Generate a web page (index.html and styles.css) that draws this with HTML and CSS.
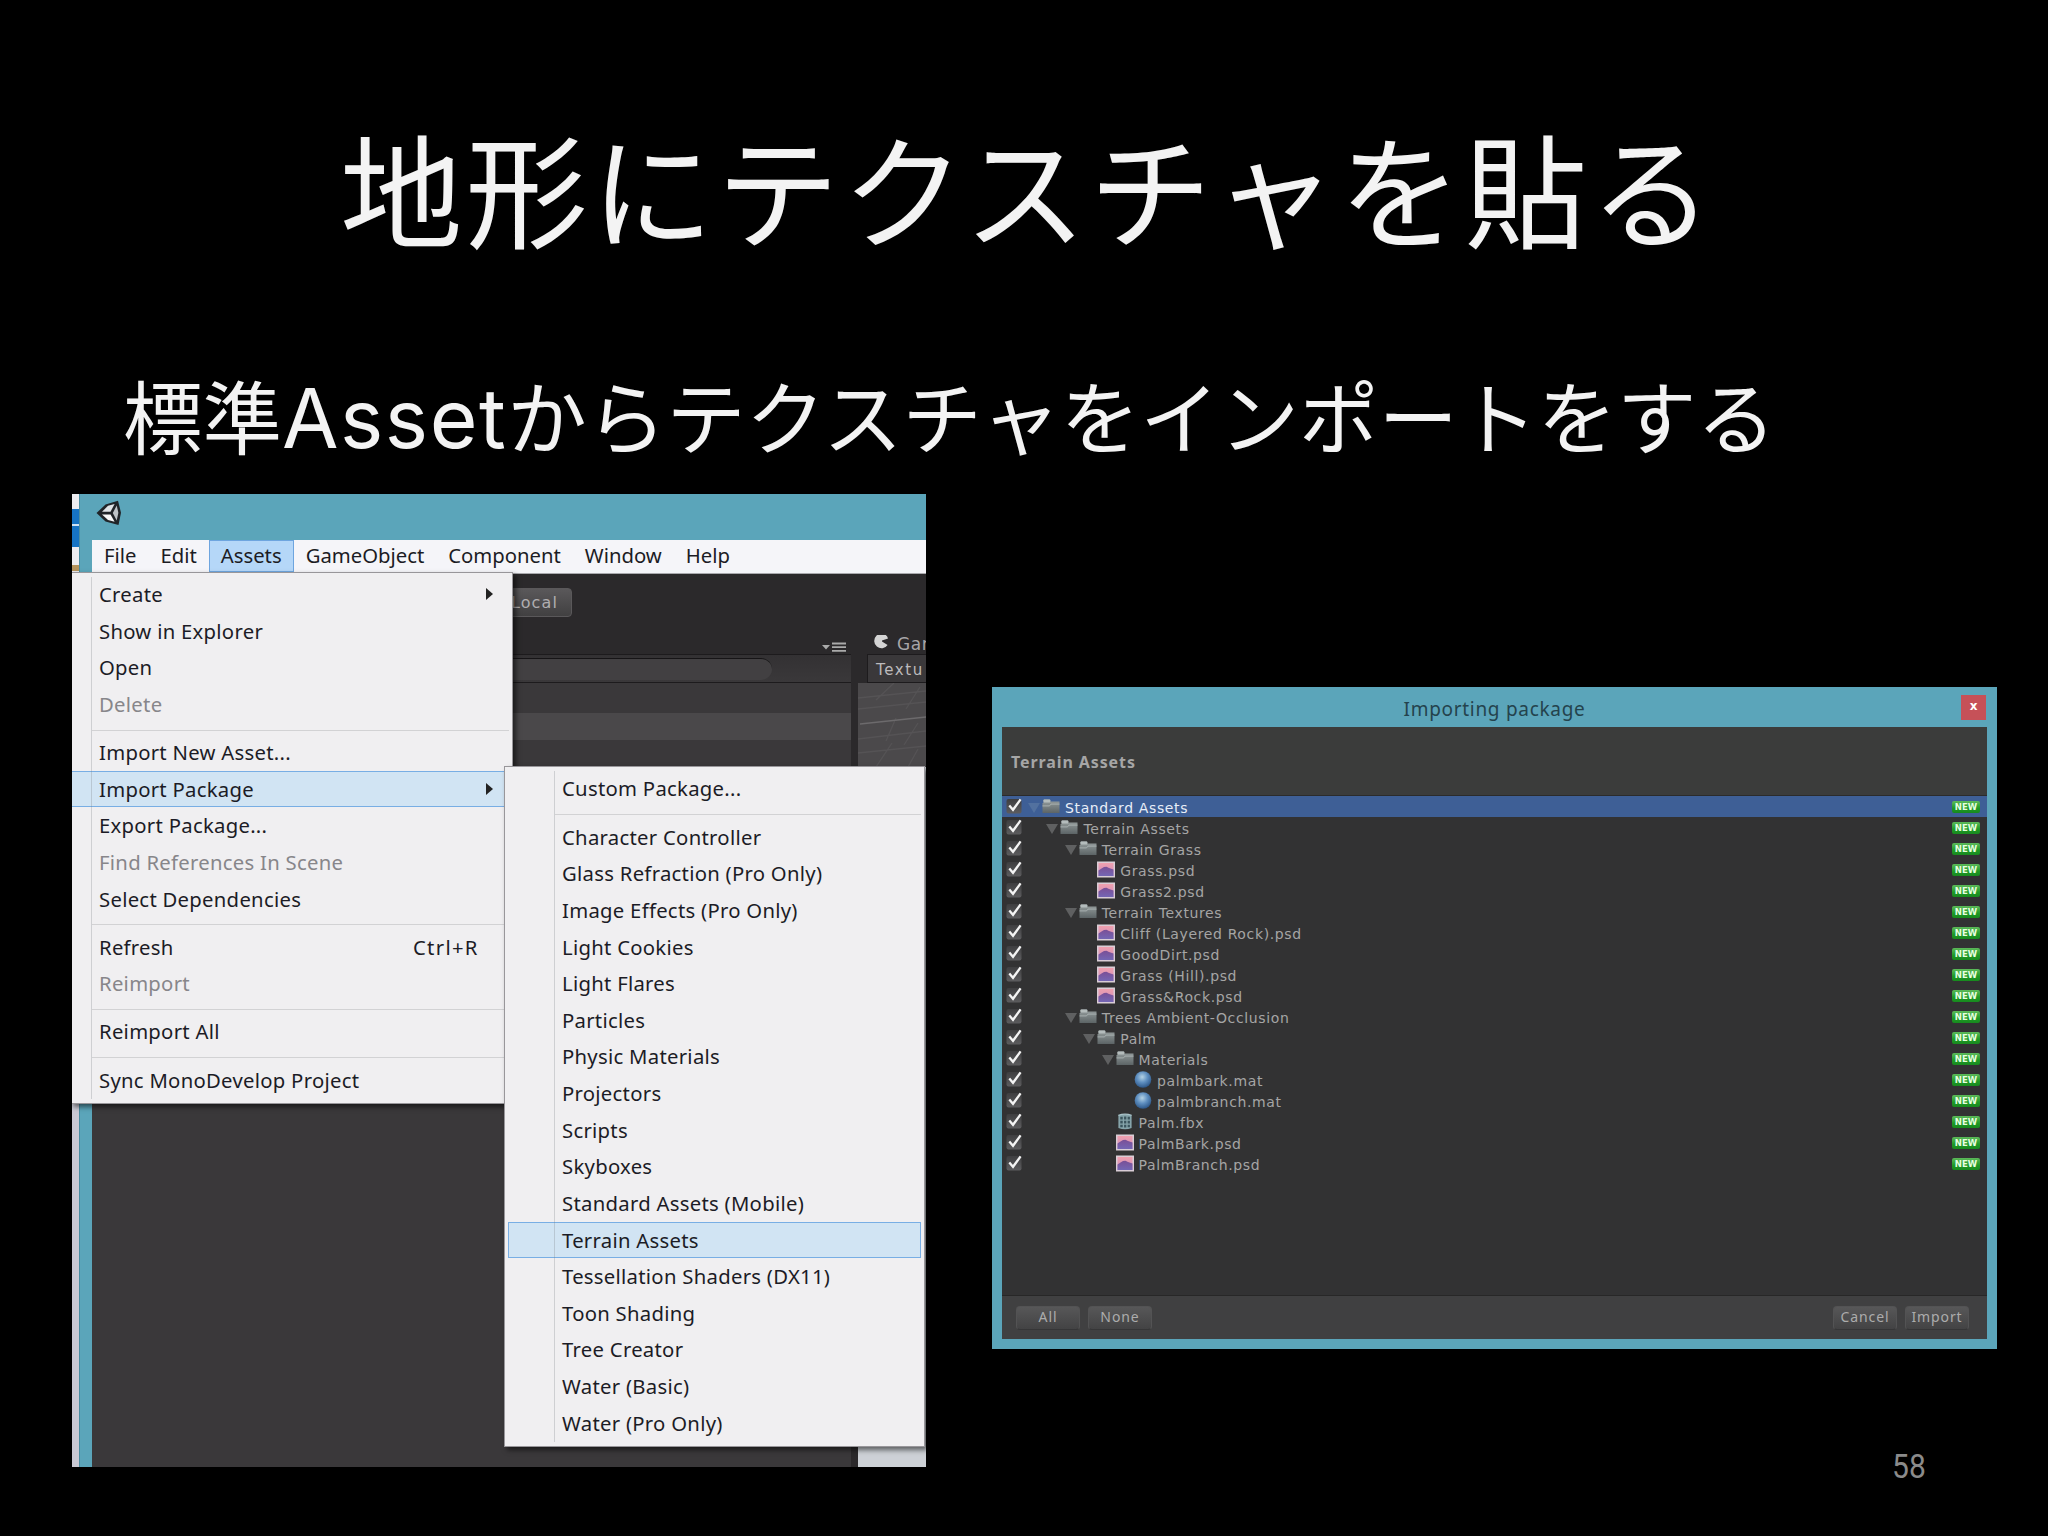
FILE: index.html
```html
<!DOCTYPE html>
<html lang="ja">
<head>
  <meta charset="UTF-8">
  <meta name="viewport" content="width=device-width, initial-scale=1.0">
  <title>地形にテクスチャを貼る</title>
  <link rel="stylesheet" href="styles.css">
</head>
<body>
  <svg class="defs" width="0" height="0">
    <defs>
      <linearGradient id="gFolder" x1="0" y1="0" x2="0" y2="1">
        <stop offset="0" stop-color="#98a0a0"/><stop offset="1" stop-color="#5c6466"/>
      </linearGradient>
      <linearGradient id="gSky" x1="0" y1="0" x2="0" y2="1">
        <stop offset="0" stop-color="#f0a0ae"/><stop offset="1" stop-color="#c98cc0"/>
      </linearGradient>
      <linearGradient id="gHill" x1="0" y1="0" x2="0" y2="1">
        <stop offset="0" stop-color="#7a4f96"/><stop offset="1" stop-color="#7466b4"/>
      </linearGradient>
      <radialGradient id="gBall" cx="0.45" cy="0.35" r="0.65">
        <stop offset="0" stop-color="#b4d2e4"/><stop offset="0.5" stop-color="#5f8fc0"/><stop offset="1" stop-color="#2c5688"/>
      </radialGradient>
      <linearGradient id="gCheck" x1="0" y1="0" x2="0" y2="1">
        <stop offset="0" stop-color="#3e3e40"/><stop offset="1" stop-color="#5c5c5e"/>
      </linearGradient>
    </defs>
    <symbol id="check" viewBox="0 0 17 18">
      <rect x="0.5" y="2" width="15" height="14.5" rx="2" fill="url(#gCheck)"/>
      <path d="M3.3 8.6L7 12.8L14.6 2.4" fill="none" stroke="#f4f4f4" stroke-width="2.3"/>
    </symbol>
    <symbol id="folder" viewBox="0 0 18 16">
      <path d="M0.5 14.5V4.5H1.5V1.8Q1.5 1 2.3 1H7.5Q8.3 1 8.3 1.8V3H17.5V14.5Z" fill="url(#gFolder)"/>
      <path d="M1.5 4V1.8Q1.5 1 2.3 1H7.5Q8.3 1 8.3 1.8V4Z" fill="#b4bcbc"/>
      <path d="M0.5 7.4H7.5L9 5.6H17.5" fill="none" stroke="#a8b0b0" stroke-width="1"/>
    </symbol>
    <symbol id="image" viewBox="0 0 18 17">
      <rect x="0" y="0.5" width="18" height="16" fill="#d9cdd6"/>
      <rect x="1.5" y="2" width="15" height="13" fill="url(#gSky)"/>
      <path d="M1.5 15V9.5L4.5 7.5L7 6L9.5 5.8L12 7L16.5 8.5V15Z" fill="url(#gHill)"/>
    </symbol>
    <symbol id="ball" viewBox="0 0 18 18">
      <circle cx="9" cy="9" r="8.8" fill="url(#gBall)"/>
    </symbol>
    <symbol id="mesh" viewBox="0 0 18 18">
      <path d="M2 2.5Q9 0 16 2.5V16Q9 18.5 2 16Z" fill="#86a4aa"/>
      <path d="M4 4H6.6V6.8H4ZM8 3.6H10.4V6.8H8ZM11.8 4H14.2V6.8H11.8ZM4 8.2H6.6V11H4ZM8 8.2H10.4V11H8ZM11.8 8.2H14.2V11H11.8ZM4 12.4H6.6V15H4ZM8 12.4H10.4V15.4H8ZM11.8 12.4H14.2V15H11.8Z" fill="#3b555d"/>
      <path d="M2 2.5Q9 0 16 2.5" fill="none" stroke="#a9c4ca" stroke-width="1.2"/>
    </symbol>
  </svg>

  <main class="slide">
    <h1 class="slide-title">地形にテクスチャを貼る</h1>
    <p class="slide-text">標準<span class="latin">Asset</span>からテクスチャをインポートをする</p>

    <div class="shots">
      <!-- Unity editor with the Assets menu open -->
      <section class="editor">
        <div class="desktop-edge"><i class="edge-blue"></i><i class="edge-tan"></i></div>
        <div class="editor-window">
          <div class="titlebar">
            <svg class="unity-logo" viewBox="0 0 26 26" width="26" height="26">
              <path d="M0.5 13L9.5 4.5L22 0.8L25 12.8L22.5 25L9.5 21.5Z" fill="#202428"/>
              <path d="M6 11.8L12 5.8L18.6 4L14.5 11.8Z" fill="#dfe3e6"/>
              <path d="M6 14.4H14.5L18.6 21.8L12 20Z" fill="#f8f8f8"/>
              <path d="M20.7 5.6L22.4 12.8L20.7 20.6L16.8 13Z" fill="#bfc4c8"/>
            </svg>
          </div>
          <nav class="menubar">
            <span>File</span><span>Edit</span><span class="active">Assets</span><span>GameObject</span><span>Component</span><span>Window</span><span>Help</span>
          </nav>
          <div class="toolbar"><span class="tool-button">Local</span></div>
          <div class="panels">
            <div class="panel-left">
              <div class="tabs">
                <svg width="25" height="11" viewBox="0 0 25 11"><path d="M0 3H8L4 7.5Z" fill="#aaa"/><path d="M10 1.5H24M10 5.2H24M10 8.9H24" stroke="#aaa" stroke-width="1.8"/></svg>
              </div>
              <div class="search-row"><div class="search"></div></div>
              <div class="strip"></div>
              <div class="strip light"></div>
            </div>
            <div class="panel-right">
              <div class="tabs">
                <svg width="15" height="16" viewBox="0 0 15 16"><path d="M13.2 3.4A7.3 7.3 0 1 0 13.6 12L8 8.6L8 7.4L14 5.6Z" fill="#d4d4d4"/></svg>
                <span>Gam</span>
              </div>
              <div class="mode-row">Textu</div>
              <svg class="scene" width="68" height="84" viewBox="0 0 68 84">
                <path d="M0 15L68 8M0 26L68 19M0 56L68 48M0 70L68 63M36 0L18 17M62 4L48 26M38 35L28 58M60 40L46 62M34 60L18 84M60 66L50 84" fill="none" stroke="#555355" stroke-width="1.3"/>
                <path d="M2 41L68 34" stroke="#6c6a6c" stroke-width="1.3"/>
              </svg>
              <div class="preview"></div>
            </div>
          </div>
        </div>

        <ul class="menu assets-menu">
          <li>Create<i class="arrow"></i></li>
          <li>Show in Explorer</li>
          <li>Open</li>
          <li class="disabled">Delete</li>
          <li class="sep"></li>
          <li>Import New Asset...</li>
          <li class="selected">Import Package<i class="arrow"></i></li>
          <li>Export Package...</li>
          <li class="disabled">Find References In Scene</li>
          <li>Select Dependencies</li>
          <li class="sep"></li>
          <li>Refresh<span class="key">Ctrl+R</span></li>
          <li class="disabled">Reimport</li>
          <li class="sep"></li>
          <li>Reimport All</li>
          <li class="sep"></li>
          <li>Sync MonoDevelop Project</li>
        </ul>

        <ul class="menu package-menu">
          <li>Custom Package...</li>
          <li class="sep"></li>
          <li>Character Controller</li>
          <li>Glass Refraction (Pro Only)</li>
          <li>Image Effects (Pro Only)</li>
          <li>Light Cookies</li>
          <li>Light Flares</li>
          <li>Particles</li>
          <li>Physic Materials</li>
          <li>Projectors</li>
          <li>Scripts</li>
          <li>Skyboxes</li>
          <li>Standard Assets (Mobile)</li>
          <li class="selected">Terrain Assets</li>
          <li>Tessellation Shaders (DX11)</li>
          <li>Toon Shading</li>
          <li>Tree Creator</li>
          <li>Water (Basic)</li>
          <li>Water (Pro Only)</li>
        </ul>
      </section>

      <section class="dialog">
        <header class="dialog-title">Importing package<span class="close">x</span></header>
        <div class="dialog-body">
          <h2>Terrain Assets</h2>
          <ul class="tree" id="tree"></ul>
          <footer>
            <button>All</button>
            <button>None</button>
            <span class="spacer"></span>
            <button>Cancel</button>
            <button>Import</button>
          </footer>
        </div>
      </section>
    </div>
    <div class="page">58</div>
  </main>

  <script>
    // [depth, icon, name]
    const items = [
      [0, 'folder', 'Standard Assets'],
      [1, 'folder', 'Terrain Assets'],
      [2, 'folder', 'Terrain Grass'],
      [3, 'image', 'Grass.psd'],
      [3, 'image', 'Grass2.psd'],
      [2, 'folder', 'Terrain Textures'],
      [3, 'image', 'Cliff (Layered Rock).psd'],
      [3, 'image', 'GoodDirt.psd'],
      [3, 'image', 'Grass (Hill).psd'],
      [3, 'image', 'Grass&amp;Rock.psd'],
      [2, 'folder', 'Trees Ambient-Occlusion'],
      [3, 'folder', 'Palm'],
      [4, 'folder', 'Materials'],
      [5, 'ball', 'palmbark.mat'],
      [5, 'ball', 'palmbranch.mat'],
      [4, 'mesh', 'Palm.fbx'],
      [4, 'image', 'PalmBark.psd'],
      [4, 'image', 'PalmBranch.psd']
    ];

    document.getElementById('tree').innerHTML = items.map(([depth, icon, name], i) => `
      <li class="${i === 0 ? 'current' : ''}">
        <svg class="check"><use href="#check"/></svg>
        <span class="node" style="margin-left: ${depth * 18.4}px">
          <i class="fold ${icon === 'folder' ? 'open' : ''}"></i>
          <svg class="icon"><use href="#${icon}"/></svg>
          <span class="name">${name}</span>
        </span>
        <b class="new">NEW</b>
      </li>`).join('');
  </script>
</body>
</html>
```
FILE: styles.css
```css
* {
  box-sizing: border-box;
}
body {
  margin: 0;
  background: #000;
}
ul {
  list-style: none;
  margin: 0;
  padding: 0;
}
.defs {
  position: absolute;
}
.slide {
  position: relative;
  width: 2048px;
  height: 1536px;
  overflow: hidden;
  background: #000;
  color: #f3f3f3;
  font-family: "Noto Sans CJK JP", sans-serif;
}
.slide-title {
  margin: 0;
  padding: 97px 0 0 340px;
  height: 354px;
  font-size: 122.5px;
  font-weight: 400;
  line-height: 178px;
  letter-spacing: 3px;
  white-space: nowrap;
}
.slide-text {
  margin: 0;
  padding-left: 123px;
  height: 140px;
  font-size: 79.5px;
  line-height: 120px;
  letter-spacing: 0;
  white-space: nowrap;
}
.slide-text .latin {
  font-family: Inter, sans-serif;
  font-size: 82px;
  letter-spacing: 1.5px;
}
.shots {
  display: flex;
  align-items: flex-start;
  gap: 66px;
  padding-left: 72px;
}
.page {
  position: absolute;
  left: 1892px;
  top: 1447px;
  font: 33px/40px Roboto, sans-serif;
  transform: scaleX(0.91);
  transform-origin: left;
  color: #8b8b8b;
}

/* editor */
.editor {
  position: relative;
  display: flex;
  width: 854px;
  height: 973px;
  overflow: hidden;
  font-family: "Noto Sans", sans-serif;
}
.desktop-edge {
  display: flex;
  flex: none;
  flex-direction: column;
  width: 7px;
  padding-top: 15px;
  background: linear-gradient(#ececf0 540px, #c9c9d4 620px);
}
.edge-blue {
  height: 38px;
  background: linear-gradient(#1673c4 15px, #cfe2f4 15px, #cfe2f4 17px, #1673c4 17px);
}
.edge-tan {
  height: 6px;
  margin-top: 18px;
  background: #b4935c;
}
.editor-window {
  flex: 1;
  min-width: 0;
  display: flex;
  flex-direction: column;
  padding-left: 12px;
  background: #5ba5ba;
  border-left: 1px solid #4a8ea3;
}
.titlebar {
  height: 46px;
  padding: 6px 0 0 4px;
}
.menubar {
  display: flex;
  height: 34px;
  background: #f5f5f9;
  border-bottom: 1px solid #a9a9ad;
  color: #1c1c24;
  font-size: 20.3px;
}
.menubar span {
  height: 32px;
  padding: 0 11px;
  border: 1px solid transparent;
  line-height: 29px;
}
.menubar .active {
  background: #b5d7f8;
  border-color: #6ea5df;
}
.toolbar {
  height: 61px;
  padding: 14px 0 0 370px;
  background: #2b292b;
}
.tool-button {
  display: block;
  width: 110px;
  height: 29px;
  padding-left: 48px;
  border: 1px solid #5a585a;
  border-radius: 4px;
  background: linear-gradient(#5a585a, #414041);
  color: #b0aeb0;
  font: 16px/27px "DejaVu Sans", sans-serif;
  letter-spacing: 1.1px;
}
.panels {
  flex: 1;
  display: flex;
  background: #2b292b;
}
.panel-left {
  flex: none;
  width: 759px;
  background: #3a383a;
}
.tabs {
  display: flex;
  height: 19px;
  background: #2b292b;
}
.panel-left .tabs {
  justify-content: flex-end;
  padding: 7px 4px 0 0;
}
.search-row {
  height: 29px;
  padding-top: 3px;
  background: linear-gradient(#333133, #3a383a);
  border-top: 1px solid #1d1b1d;
  border-bottom: 1px solid #1d1b1d;
}
.search {
  width: 680px;
  height: 22px;
  background: #424042;
  border-top: 1px solid #161416;
  border-radius: 0 11px 11px 0;
}
.strip {
  height: 30px;
}
.strip.light {
  height: 27px;
  background: #4a484a;
}
.panel-right {
  display: flex;
  flex-direction: column;
  flex: 1;
  min-width: 0;
  margin-left: 7px;
  overflow: hidden;
  color: #a8a6a8;
  font: 17px/18px "DejaVu Sans", sans-serif;
}
.panel-right .tabs {
  padding-left: 16px;
  gap: 8px;
  letter-spacing: 0.6px;
}
.panel-right .tabs svg {
  flex: none;
  margin-top: -2px;
}
.mode-row {
  flex: none;
  height: 29px;
  margin-left: 9px;
  padding-left: 8px;
  background: #3a383a;
  border-top: 1px solid #1d1b1d;
  border-left: 1px solid #1d1b1d;
  border-bottom: 1px solid #1d1b1d;
  color: #bdbbbd;
  font-size: 15px;
  line-height: 30px;
  letter-spacing: 1.6px;
}
.scene {
  flex: none;
  background: #4b494b;
}
.preview {
  flex: 1;
  background: #cdd1d6;
}
.menu {
  position: absolute;
  padding: 3px 0;
  background: #f0eff1;
  border: 1.5px solid #98969a;
  box-shadow: 3px 3px 5px rgba(0, 0, 0, 0.55);
  color: #1c1c26;
  font-size: 20.3px;
  line-height: 36.64px;
  letter-spacing: 0.28px;
  white-space: nowrap;
}
.menu li {
  position: relative;
  height: 36.64px;
}
.menu .sep {
  height: 12px;
}
.menu .sep::after {
  content: "";
  display: block;
  height: 7px;
  border-bottom: 1px solid #d2d2d4;
}
.menu .disabled {
  color: #87868a;
}
.menu .selected {
  background: #d1e4f3;
  border: 1px solid #78aee4;
  line-height: 34.64px;
}
.menu::before {
  content: "";
  position: absolute;
  z-index: 1;
  top: 4px;
  bottom: 4px;
  border-left: 1px solid rgba(120, 125, 130, 0.28);
}
.assets-menu {
  left: -2px;
  top: 78px;
  width: 443px;
  height: 532px;
}
.assets-menu::before {
  left: 20px;
}
.assets-menu li {
  padding-left: 28px;
}
.assets-menu .sep {
  height: 11.5px;
  padding: 0 3px 0 21px;
}
.assets-menu .selected {
  padding-left: 27px;
}
.assets-menu .key {
  position: absolute;
  left: 342px;
  letter-spacing: 1.3px;
}
.arrow {
  position: absolute;
  left: 415px;
  top: 12px;
  border: solid transparent;
  border-width: 6px 0 6px 7px;
  border-left-color: #222;
}
.selected .arrow {
  left: 414px;
  top: 11px;
}
.package-menu {
  left: 432px;
  top: 272px;
  width: 421px;
  height: 681px;
}
.package-menu::before {
  left: 49px;
}
.package-menu li {
  padding-left: 57px;
}
.package-menu .sep {
  padding: 0 3px 0 50px;
}
.package-menu .selected {
  margin: 0 3px;
  padding-left: 53px;
}

/* import dialog */
.dialog {
  display: flex;
  flex-direction: column;
  width: 1005px;
  height: 662px;
  margin-top: 193px;
  padding: 0 10px 10px;
  background: #5ba5ba;
  font-family: "DejaVu Sans", sans-serif;
}
.dialog-title {
  position: relative;
  height: 40px;
  color: #24434d;
  font: 19px/44px "Noto Sans", sans-serif;
  letter-spacing: 0.7px;
  text-align: center;
}
.close {
  position: absolute;
  right: 1px;
  top: 8px;
  width: 25px;
  height: 25px;
  background: #c65158;
  color: #fff;
  font: bold 12px/23px "DejaVu Sans", sans-serif;
  letter-spacing: 0;
}
.dialog-body {
  flex: 1;
  display: flex;
  flex-direction: column;
  background: #323233;
}
.dialog-body h2 {
  margin: 0;
  height: 69px;
  padding-left: 9px;
  background: #3b3c3b;
  border-bottom: 1px solid #2b2b2b;
  color: #a6a6a6;
  font: bold 16px/71px "Noto Sans", sans-serif;
  letter-spacing: 0.9px;
}
.tree {
  flex: 1;
  color: #a5a5a5;
  font-size: 14px;
}
.tree li {
  display: flex;
  align-items: center;
  height: 21px;
  padding: 2px 7px 0 4px;
}
.tree .current {
  background: #3e5f96;
  color: #e8eef8;
}
.tree .check {
  width: 17px;
  height: 18px;
  margin-top: -4px;
}
.node {
  display: flex;
  align-items: center;
  padding-left: 5px;
}
.fold {
  width: 14px;
}
.fold.open {
  width: 0;
  border: solid transparent;
  border-width: 10px 6px 0;
  border-top-color: #5f6061;
  margin-right: 2px;
}
.current .fold.open {
  border-top-color: #52719f;
}
.icon {
  width: 18px;
  height: 17px;
  margin-top: -2px;
}
.name {
  margin: 1px 0 0 5px;
  line-height: 21px;
  letter-spacing: 0.63px;
  white-space: nowrap;
}
.new {
  width: 28px;
  height: 12px;
  margin: -2px 0 0 auto;
  border-radius: 2px;
  background: linear-gradient(#5dba5a, #1f9a26 60%, #178a1e);
  color: #e6ffe0;
  font-size: 8.5px;
  line-height: 12px;
  text-align: center;
}
.dialog footer {
  display: flex;
  gap: 8px;
  height: 44px;
  padding: 10px 18px 0 14px;
  background: #404041;
  border-top: 1px solid #272727;
}
.spacer {
  flex: 1;
}
.dialog button {
  width: 64px;
  height: 24px;
  padding: 0 0 3px;
  border: 1px solid #535354;
  border-bottom-color: #363637;
  border-radius: 4px;
  background: linear-gradient(#575758, #434344);
  color: #acacac;
  font: 14px/19px "Noto Sans", sans-serif;
  letter-spacing: 0.9px;
}
```
